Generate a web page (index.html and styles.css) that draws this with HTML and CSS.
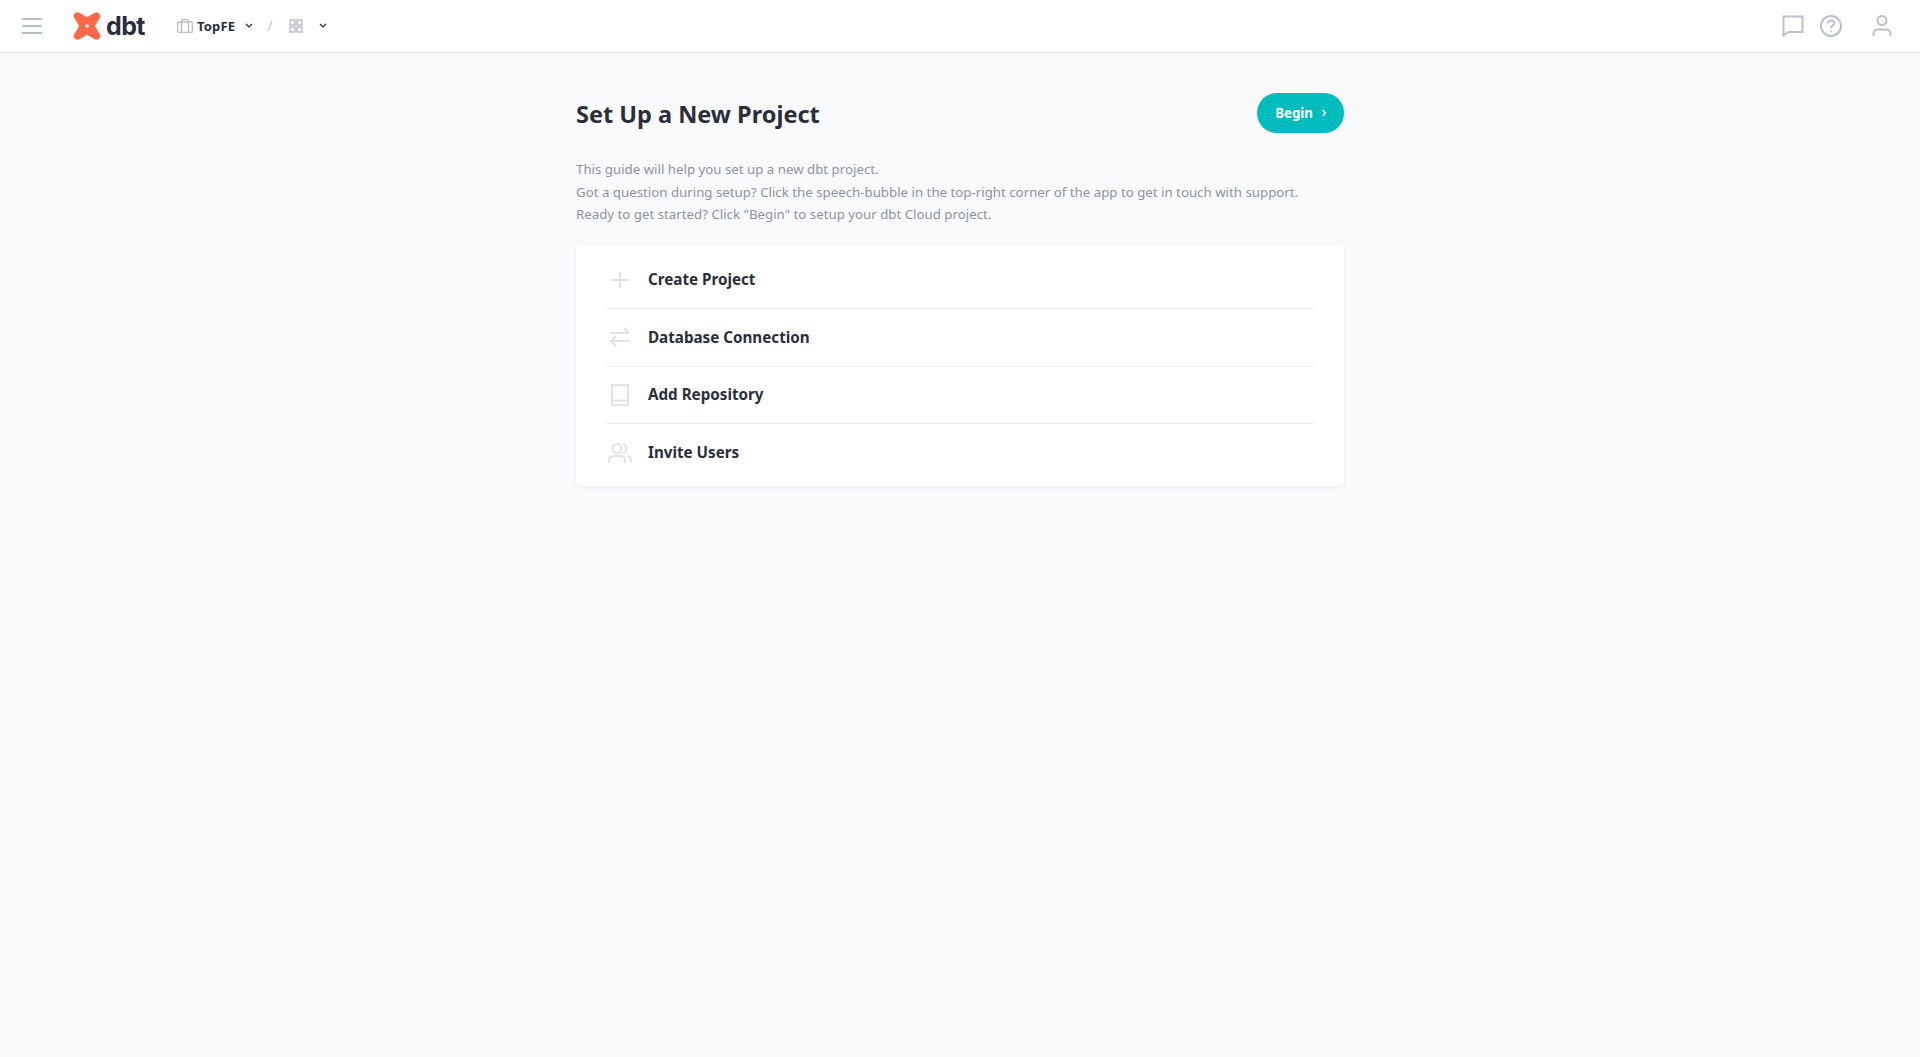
FILE: index.html
```html
<!DOCTYPE html>
<html lang="en">
<head>
  <meta charset="UTF-8">
  <title>dbt Cloud</title>
  <link rel="stylesheet" href="styles.css">
</head>
<body>

  <header class="topbar">
    <div class="topbar-left">
      <svg class="menu-icon" width="20" height="16" viewBox="0 0 20 16"><path d="M0 1h20M0 8h20M0 15h20"/></svg>
      <div class="logo">
        <svg width="28" height="28" viewBox="0 0 28 28"><path fill="#ff694a" d="M3 .6c1-.6 2.4-.5 3.4.1L14 5.2 21.6.7c1-.7 2.500-.7 3.500 0 1.300.8 2.300 2 2.300 3.400 0 .9-.5 1.700-1 2.500L21.900 14l4.500 7.400c.6.900 1 1.700 1 2.600 0 1.300-1.100 2.700-2.400 3.400-1.100.6-2.400.5-3.400-.2L14 22.800l-7.600 4.400c-1 .7-2.400.8-3.500.2C1.600 26.700.6 25.300.6 24c0-.9.4-1.700 1-2.600L6.100 14 1.600 6.600C1 5.800.6 4.900.6 4 .6 2.600 1.700 1.300 3 .6z"/><circle cx="14" cy="14" r="1.700" fill="#fff"/></svg>
        <span class="logo-text">dbt</span>
      </div>
      <nav class="crumbs">
        <svg class="crumb-icon" width="16" height="14" viewBox="0 0 16 14"><rect x=".6" y="3" width="14.800" height="10.400" rx="1.500"/><path d="M5 3V1.300C5 .9 5.300.6 5.700.6h4.600c.4 0 .7.3.7.7V3M4.500 3v10.400M11.500 3v10.400"/></svg>
        <span class="crumb-name">TopFE</span>
        <svg class="caret" width="8" height="5" viewBox="0 0 8 5"><path d="M1 1l3 3 3-3"/></svg>
        <span class="crumb-slash">/</span>
        <svg class="crumb-grid" width="14" height="14" viewBox="0 0 14 14"><path d="M1 1h5v5H1zM8 1h5v5H8zM1 8h5v5H1zM8 8h5v5H8z"/></svg>
        <svg class="caret" width="8" height="5" viewBox="0 0 8 5"><path d="M1 1l3 3 3-3"/></svg>
      </nav>
    </div>
    <div class="topbar-right">
      <svg class="tool-icon" width="22" height="22" viewBox="0 0 22 22"><path d="M1.500 1.500h19v15.500H6.500L1.500 20.500z"/></svg>
      <svg class="tool-icon" width="22" height="22" viewBox="0 0 22 22"><circle cx="11" cy="11" r="10"/><path d="M7.800 8.500c0-1.900 1.400-3.100 3.200-3.100s3.200 1.200 3.200 2.900c0 2.500-3.200 2.500-3.200 5"/><path class="dot" d="M11 15.500v1.200"/></svg>
      <svg class="tool-icon user" width="20" height="22" viewBox="0 0 20 22"><circle cx="10" cy="5.500" r="4.500"/><path d="M1.500 21v-2.500c0-2.300 1.900-4 4.200-4h8.600c2.300 0 4.200 1.700 4.200 4V21"/></svg>
    </div>
  </header>

  <main class="page">
    <div class="page-head">
      <h1>Set Up a New Project</h1>
      <button class="begin-btn">Begin
        <svg width="6" height="8" viewBox="0 0 6 8"><path d="M1.500 1l3 3-3 3"/></svg>
      </button>
    </div>

    <div class="intro">
      <p>This guide will help you set up a new dbt project.</p>
      <p>Got a question during setup? Click the speech-bubble in the top-right corner of the app to get in touch with support.</p>
      <p>Ready to get started? Click "Begin" to setup your dbt Cloud project.</p>
    </div>

    <ul class="steps">
      <li class="step">
        <span class="step-icon"><svg width="16" height="16" viewBox="0 0 16 16"><path d="M8 0v16M0 8h16"/></svg></span>
        <span class="step-name">Create Project</span>
      </li>
      <li class="step">
        <span class="step-icon"><svg width="20" height="20" viewBox="0 0 20 20"><path d="M0 6h19M14 1l5 5M20 14H1M6 9l-5 5 5 5"/></svg></span>
        <span class="step-name">Database Connection</span>
      </li>
      <li class="step">
        <span class="step-icon"><svg width="18" height="22" viewBox="0 0 18 22"><path d="M1 1h16v20H1zM1 16.500h16"/></svg></span>
        <span class="step-name">Add Repository</span>
      </li>
      <li class="step">
        <span class="step-icon"><svg width="24" height="20" viewBox="0 0 24 20"><circle cx="9" cy="5.500" r="4.500"/><path d="M1 19.500v-2c0-2.500 2-4.500 4.500-4.500h7c2.500 0 4.500 2 4.500 4.500v2M15 1.200c2 .4 3.500 2.200 3.500 4.300s-1.500 3.900-3.500 4.300M19 13.100c2.300.4 4 2.300 4 4.400v2"/></svg></span>
        <span class="step-name">Invite Users</span>
      </li>
    </ul>
  </main>

</body>
</html>
```

FILE: styles.css
```css
* {
  box-sizing: border-box;
}
body {
  margin: 0;
  min-height: 1057px;
  font-family: "Noto Sans", "Open Sans", sans-serif;
  color: #2a2e3b;
  background: #f9fafc;
}
svg {
  display: block;
  fill: none;
}

/* Top bar */
.topbar {
  display: flex;
  justify-content: space-between;
  align-items: center;
  height: 53px;
  padding: 0 28px 1px 22px;
  background: #fff;
  border-bottom: 1px solid #e2e4ea;
}
.topbar-left,
.topbar-right,
.logo,
.crumbs {
  display: flex;
  align-items: center;
}
.menu-icon path {
  stroke: #b9bdc6;
  stroke-width: 2;
}
.menu-icon {
  margin-right: 31px;
}
.logo {
  gap: 5px;
  margin-right: 32px;
}
.logo-text {
  font-family: Inter, sans-serif;
  font-size: 25px;
  font-weight: 700;
  line-height: 28px;
  letter-spacing: -0.6px;
}
.crumb-icon {
  margin-right: 4px;
}
.crumb-icon *,
.crumb-grid path,
.tool-icon * {
  stroke: #bcc0c8;
  stroke-width: 1.5;
}
.crumb-name {
  font-size: 13px;
  font-weight: 700;
  letter-spacing: 0.2px;
  margin-right: 10px;
}
.caret path {
  stroke: #262a38;
  stroke-width: 1.2;
}
.crumb-slash {
  margin: 0 17px 0 14px;
  font-size: 14px;
  color: #c4c7ce;
}
.crumb-grid {
  margin-right: 16px;
}
.topbar-right {
  gap: 16px;
}
.tool-icon * {
  stroke-width: 2;
}
.tool-icon.user {
  margin-left: 14px;
}

/* Content */
.page {
  width: 768px;
  margin: 0 auto;
  padding-top: 40px;
}
.page-head {
  display: flex;
  justify-content: space-between;
  align-items: center;
  height: 40px;
  margin-bottom: 25px;
}
h1 {
  margin: 2px 0 0;
  font-size: 23.500px;
  font-weight: 700;
}
.begin-btn {
  display: flex;
  align-items: center;
  gap: 8px;
  height: 40px;
  padding: 0 17px 0 18px;
  border: 0;
  border-radius: 20px;
  background: #00bcbd;
  color: #fff;
  font-family: inherit;
  font-size: 13.300px;
  font-weight: 700;
}
.begin-btn path {
  stroke: #fff;
  stroke-width: 1.5;
}
.intro {
  margin-bottom: 19px;
  font-size: 13.270px;
  line-height: 22.500px;
  color: #8e939e;
}
.intro p {
  margin: 0;
}
.steps {
  list-style: none;
  margin: 0;
  padding: 7px 30px 4px;
  background: #fff;
  border-radius: 5px;
  box-shadow: 0 1px 4px rgba(38,42,56,0.08);
}
.step {
  display: flex;
  align-items: center;
  height: 57.500px;
  border-bottom: 1px solid #ebecef;
}
.step:last-child {
  border-bottom: 0;
}
.step-icon {
  display: flex;
  justify-content: center;
  width: 28px;
  margin-right: 14px;
}
.step-icon svg {
  stroke: #e0e2e7;
  stroke-width: 2;
}
.step-name {
  margin-top: -1px;
  font-size: 15.200px;
  font-weight: 700;
}
```
